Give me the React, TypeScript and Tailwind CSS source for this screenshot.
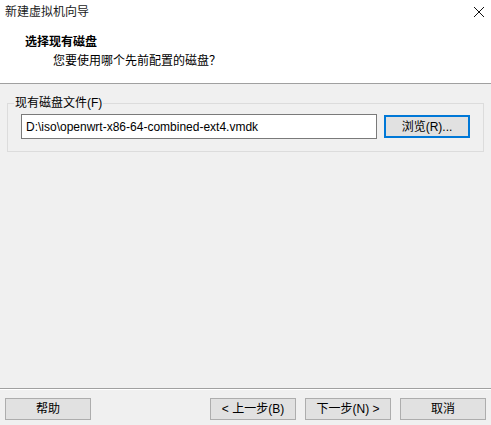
import React from "react";

const font = { fontFamily: '"Liberation Sans", "Noto Sans CJK SC", sans-serif' };

function Btn({ children, className = "" }: { children: React.ReactNode; className?: string }) {
  return (
    <button
      className={`w-[86px] h-[22px] bg-[#e1e1e1] border border-[#adadad] text-[12px] leading-[14px] text-black flex items-center justify-center ${className}`}
    >
      {children}
    </button>
  );
}

export default function App() {
  return (
    <div
      className="w-[491px] h-[425px] flex flex-col bg-[#f0f0f0] text-black overflow-hidden"
      style={font}
    >
      <div className="h-[83px] bg-white flex flex-col">
        <div className="h-[24px] flex items-center justify-between pl-[5px] pr-[6px]">
          <span className="text-[12px] leading-[16px] text-[#1a1a1a]">新建虚拟机向导</span>
          <svg width="12" height="12" viewBox="0 0 12 12" className="mt-[-1px]">
            <path d="M1 1 L11 11 M11 1 L1 11" stroke="#111" strokeWidth="1" fill="none" />
          </svg>
        </div>
        <div className="pl-[25px] mt-[10px] text-[12px] leading-[16px] font-bold">选择现有磁盘</div>
        <div className="pl-[53px] mt-[3px] text-[12px] leading-[16px]">您要使用哪个先前配置的磁盘？</div>
      </div>
      <div className="h-px bg-[#a0a0a0]" />
      <div className="flex-1 flex flex-col">
        <fieldset className="ml-[7px] mt-[11px] w-[477px] h-[57px] border border-[#dcdcdc] pl-[6px] pr-[13px]">
          <legend className="px-[1px] text-[12px] leading-[16px]">现有磁盘文件(F)</legend>
          <div className="flex items-center mt-[3px] ml-[7px]">
            <div className="w-[356px] h-[25px] bg-white border border-[#7a7a7a] flex items-center pl-[4px] text-[12px] leading-[16px]">
              D:\iso\openwrt-x86-64-combined-ext4.vmdk
            </div>
            <button className="ml-[7px] w-[86px] h-[23px] bg-[#e1e1e1] border-2 border-[#0078d7] text-[12px] leading-[14px] flex items-center justify-center">
              浏览(R)...
            </button>
          </div>
        </fieldset>
      </div>
      <div className="h-px bg-[#a0a0a0]" />
      <div className="h-px bg-white" />
      <div className="h-[35px] flex items-start pt-[8px] pl-[5px] pr-[5px]">
        <Btn>帮助</Btn>
        <div className="flex-1" />
        <Btn>&lt; 上一步(B)</Btn>
        <Btn className="ml-[9px]">下一步(N) &gt;</Btn>
        <Btn className="ml-[9px]">取消</Btn>
      </div>
    </div>
  );
}
